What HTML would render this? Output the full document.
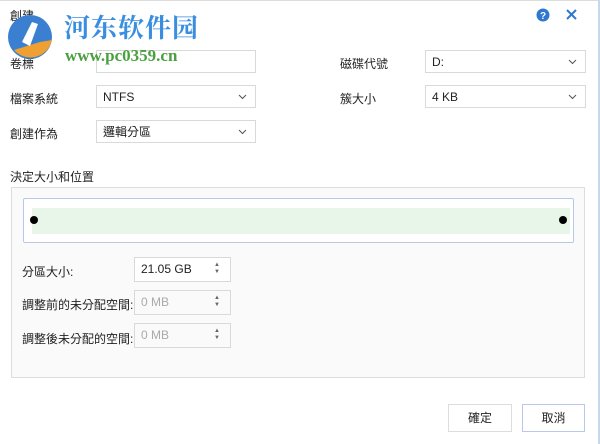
<!DOCTYPE html><html><head><meta charset="utf-8"><style>
body{margin:0;width:600px;height:444px;background:#fff;font-family:"Liberation Sans","Noto Sans CJK TC",sans-serif;font-size:12px;color:#222;position:relative;overflow:hidden}
.a{position:absolute}
.box{position:absolute;border:1px solid #d9d9d9;background:#fff;box-sizing:border-box;padding-left:6px;line-height:22px}
.chev{position:absolute;right:8px;top:8px;width:9px;height:6px}
.spin{position:absolute;right:10px;top:4px;font-size:6px;line-height:7px;color:#666}
.btn{position:absolute;border:1px solid #ddd;background:#fff;text-align:center;line-height:26px;font-size:12px;box-sizing:border-box}
.wm{z-index:5}
</style></head><body>
<div class="a" style="left:0;top:0;width:600px;height:1px;background:#ddd"></div>
<div class="a" style="left:10px;top:7px">創建</div>
<svg class="a wm" style="left:4px;top:12px" width="60" height="50"><circle cx="26" cy="25" r="22" fill="#3a7fd0"/><path d="M10 38 A22 22 0 0 0 48 28 L36 30 Z" fill="#f0a030"/><path d="M18 30 L28 10 L34 12 L26 34 Z" fill="#fff"/></svg>
<div class="a wm" style="left:64px;top:8px;font-size:26px;font-weight:bold;color:#3a8ee0;font-family:'Noto Serif CJK SC',serif;letter-spacing:1px">河东软件园</div>
<div class="a wm" style="left:65px;top:46px;font-size:17px;font-weight:bold;color:#4aa040;font-family:'Liberation Serif',serif">www.pc0359.cn</div>
<svg class="a" style="left:536px;top:8px" width="14" height="14"><circle cx="7" cy="7" r="6.5" fill="#2f78d0"/><text x="7" y="11" text-anchor="middle" font-size="10" font-weight="bold" fill="#fff" font-family="Liberation Sans">?</text></svg>
<svg class="a" style="left:566px;top:9px" width="11" height="11"><path d="M1 1L10 10M10 1L1 10" stroke="#2f78d0" stroke-width="2"/></svg>
<div class="a" style="left:10px;top:55px">卷標</div>
<div class="box" style="left:96px;top:50px;width:160px;height:23px"></div>
<div class="a" style="left:10px;top:90px">檔案系統</div>
<div class="box" style="left:96px;top:85px;width:160px;height:23px">NTFS<svg class="chev"><path d="M1 1L4.5 4.5L8 1" stroke="#555" fill="none"/></svg></div>
<div class="a" style="left:10px;top:125px">創建作為</div>
<div class="box" style="left:96px;top:120px;width:160px;height:23px">邏輯分區<svg class="chev"><path d="M1 1L4.5 4.5L8 1" stroke="#555" fill="none"/></svg></div>
<div class="a" style="left:340px;top:55px">磁碟代號</div>
<div class="box" style="left:425px;top:50px;width:161px;height:23px">D:<svg class="chev"><path d="M1 1L4.5 4.5L8 1" stroke="#555" fill="none"/></svg></div>
<div class="a" style="left:340px;top:90px">簇大小</div>
<div class="box" style="left:425px;top:85px;width:161px;height:23px">4 KB<svg class="chev"><path d="M1 1L4.5 4.5L8 1" stroke="#555" fill="none"/></svg></div>
<div class="a" style="left:10px;top:168px">決定大小和位置</div>
<div class="a" style="left:11px;top:187px;width:574px;height:191px;border:1px solid #ddd;background:#fafafa;box-sizing:border-box"></div>
<div class="a" style="left:23px;top:198px;width:551px;height:45px;border:1px solid #b8c8ec;background:#fff;box-sizing:border-box;border-radius:2px"></div>
<div class="a" style="left:32px;top:208px;width:538px;height:26px;background:#e8f6ea"></div>
<div class="a" style="left:30px;top:216px;width:8px;height:8px;border-radius:50%;background:#000"></div>
<div class="a" style="left:559px;top:216px;width:8px;height:8px;border-radius:50%;background:#000"></div>
<div class="a" style="left:22px;top:263px">分區大小:</div>
<div class="box" style="left:134px;top:257px;width:97px;height:25px;line-height:23px">21.05 GB<span class="spin">▲<br>▼</span></div>
<div class="a" style="left:22px;top:296px">調整前的未分配空間:</div>
<div class="box" style="left:134px;top:290px;width:97px;height:25px;line-height:23px;color:#aaa;background:#fafafa">0 MB<span class="spin">▲<br>▼</span></div>
<div class="a" style="left:22px;top:330px">調整後未分配的空間:</div>
<div class="box" style="left:134px;top:323px;width:97px;height:25px;line-height:23px;color:#aaa;background:#fafafa">0 MB<span class="spin">▲<br>▼</span></div>
<div class="btn" style="left:448px;top:404px;width:64px;height:28px">確定</div>
<div class="btn" style="left:522px;top:404px;width:63px;height:28px;border-color:#b8c8ec">取消</div>
<div class="a" style="left:598px;top:0;width:2px;height:444px;background:#c8d8ec"></div>
</body></html>
